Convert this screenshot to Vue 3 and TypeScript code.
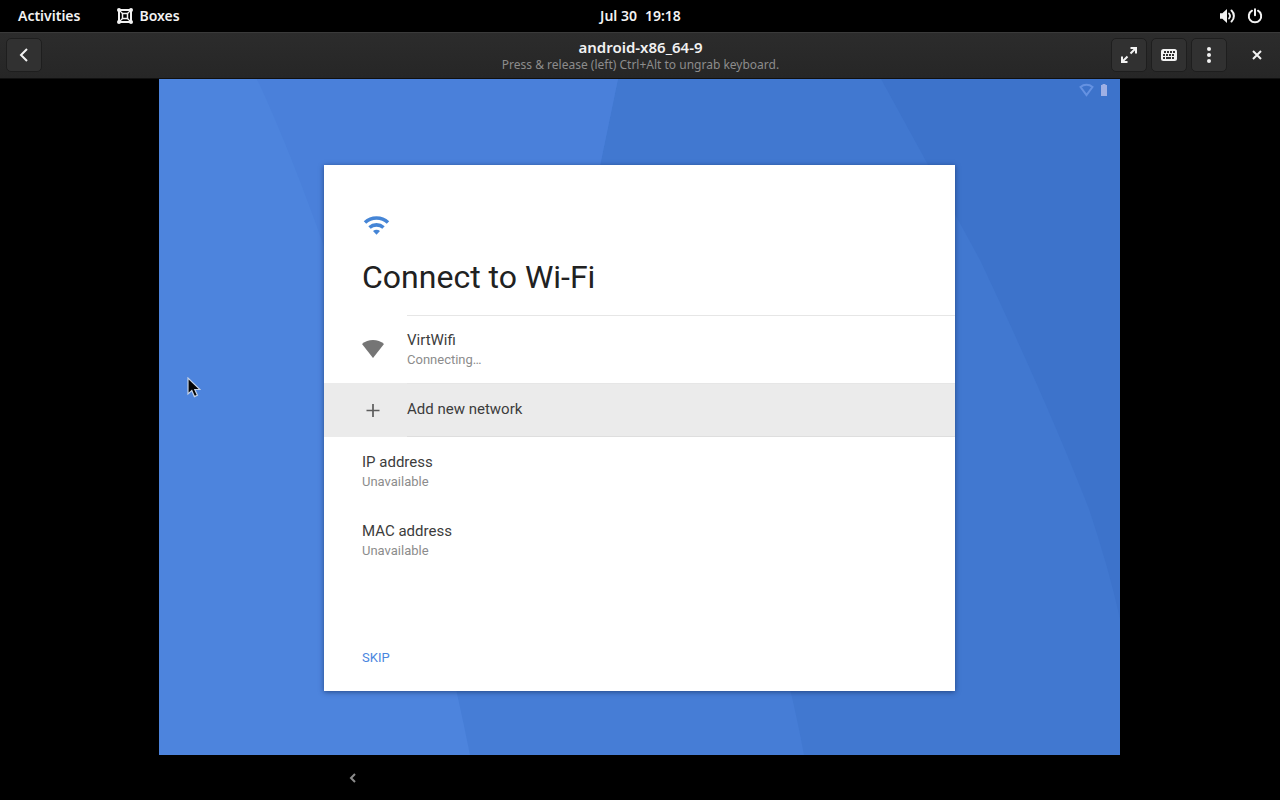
<script setup lang="ts">
interface Network {
  name: string
  status?: string
  icon: 'signal' | 'plus'
  active: boolean
}

interface Detail {
  label: string
  value: string
}

const networks: Network[] = [
  { name: 'VirtWifi', status: 'Connecting…', icon: 'signal', active: false },
  { name: 'Add new network', icon: 'plus', active: true },
]

const details: Detail[] = [
  { label: 'IP address', value: 'Unavailable' },
  { label: 'MAC address', value: 'Unavailable' },
]
</script>

<template>
  <div class="desktop">
    <header class="topbar">
      <nav class="topbar-left">
        <button type="button" class="bar-button">Activities</button>
        <button type="button" class="bar-button">
          <svg viewBox="0 0 16 16" width="16" height="16" aria-hidden="true">
            <g fill="none" stroke="currentColor">
              <path d="M2 2h12v12H2z" stroke-width="2" />
              <path d="M5.5 5.5h5v5h-5z" stroke-width="1.5" />
              <path d="M2 2l3.5 3.5M14 2l-3.5 3.5M2 14l3.5-3.5M14 14l-3.5-3.5" stroke-width="1.2" />
            </g>
            <g fill="currentColor">
              <circle cx="2" cy="2" r="2" />
              <circle cx="14" cy="2" r="2" />
              <circle cx="2" cy="14" r="2" />
              <circle cx="14" cy="14" r="2" />
            </g>
          </svg>
          Boxes
        </button>
      </nav>
      <button type="button" class="bar-button clock"><span>Jul 30</span><span>19:18</span></button>
      <button type="button" class="bar-button status" aria-label="System menu">
        <svg viewBox="0 0 18 16" width="18" height="16" aria-hidden="true">
          <path d="M2 5.2h2.4L9 1v14l-4.600-4.200H2z" fill="currentColor" />
          <path d="M11 5.500a3.800 3.800 0 0 1 0 5" fill="none" stroke="currentColor" stroke-width="1.700" stroke-linecap="round" />
          <path d="M13.500 2.500c3.200 3 3.200 8 0 11" fill="none" stroke="currentColor" stroke-width="2" stroke-linecap="round" />
        </svg>
        <svg viewBox="0 0 16 16" width="16" height="16" aria-hidden="true">
          <path d="M5 2.700a6.200 6.200 0 1 0 6 0" fill="none" stroke="currentColor" stroke-width="2" stroke-linecap="round" />
          <path d="M8 1.300v6" stroke="currentColor" stroke-width="2" stroke-linecap="round" />
        </svg>
      </button>
    </header>

    <div class="titlebar">
      <div class="tools">
        <button type="button" class="tool" aria-label="Back">
          <svg viewBox="0 0 16 16" width="16" height="16" aria-hidden="true">
            <path d="M11 2L5 8l6 6" fill="none" stroke="currentColor" stroke-width="2" />
          </svg>
        </button>
      </div>
      <div class="caption">
        <h1>android-x86_64-9</h1>
        <p>Press &amp; release (left) Ctrl+Alt to ungrab keyboard.</p>
      </div>
      <div class="tools tools-right">
        <button type="button" class="tool" aria-label="Fullscreen">
          <svg viewBox="0 0 16 16" width="16" height="16" aria-hidden="true">
            <path d="M9.500 1H15v5.500M15 1L9.500 6.500M6.500 15H1V9.500M1 15l5.500-5.500" fill="none" stroke="currentColor" stroke-width="2" />
          </svg>
        </button>
        <button type="button" class="tool" aria-label="Send key combinations">
          <svg viewBox="0 0 16 16" width="16" height="16" aria-hidden="true">
            <rect x="0" y="2" width="16" height="12" rx="2.500" fill="currentColor" />
            <g fill="#303030">
              <rect x="3" y="4" width="2" height="2" />
              <rect x="6" y="4" width="2" height="2" />
              <rect x="9" y="4" width="2" height="2" />
              <rect x="12" y="4" width="2" height="2" />
              <rect x="2" y="7" width="2" height="2" />
              <rect x="5" y="7" width="2" height="2" />
              <rect x="8" y="7" width="2" height="2" />
              <rect x="11" y="7" width="2" height="2" />
              <rect x="2" y="10" width="2" height="2" />
              <rect x="5" y="10" width="5" height="2" />
              <rect x="11" y="10" width="2" height="2" />
            </g>
          </svg>
        </button>
        <button type="button" class="tool" aria-label="Menu">
          <svg viewBox="0 0 16 16" width="16" height="16" aria-hidden="true">
            <g fill="currentColor">
              <circle cx="8" cy="2" r="2" />
              <circle cx="8" cy="8" r="2" />
              <circle cx="8" cy="14" r="2" />
            </g>
          </svg>
        </button>
        <button type="button" class="close" aria-label="Close">
          <svg viewBox="0 0 16 16" width="16" height="16" aria-hidden="true">
            <path d="M4 4l8 8M12 4l-8 8" stroke="currentColor" stroke-width="2" />
          </svg>
        </button>
      </div>
    </div>

    <main class="guest">
      <div class="screen">
        <svg class="wallpaper" viewBox="0 0 961 676" preserveAspectRatio="none" aria-hidden="true">
          <path d="M0 0h961v676H0z" fill="#4178d0" />
          <path d="M722 0Q761 71 821 181Q889 325 930 430Q950 490 961 540V0z" fill="#3d73cb" />
          <path d="M98 0H459L441 87L560 380Q620 540 645 676H311z" fill="#467dd6" />
          <path d="M98 0H459L441 87L420 300H200z" fill="#4a80da" />
          <path d="M0 0H98Q140 90 190 240Q270 470 311 676H0z" fill="#4d84dd" />
        </svg>

        <svg class="indicators" viewBox="0 0 30 14" width="30" height="14" aria-hidden="true">
          <path d="M1.500 4C5 1 10 1 13.500 4L7.500 12z" fill="none" stroke="#6592e2" stroke-width="2" />
          <path d="M22 2h1.500V1h3v1H28v11h-6z" fill="#9fb0e4" />
        </svg>

        <section class="dialog" aria-labelledby="wifi-title">
          <svg class="wifi-logo" viewBox="0 0 28 20" width="28" height="20" aria-hidden="true">
            <g fill="none" stroke="#4585d6" stroke-width="3.600">
              <path d="M2 7.500C8.500 1.500 18.500 1.500 25 7.500" />
              <path d="M6.500 12.500C10.500 9 16.500 9 20.500 12.500" />
            </g>
            <path d="M10 16c2-1.800 5-1.800 7 0l-3.500 3.700z" fill="#4585d6" />
          </svg>
          <h2 id="wifi-title">Connect to Wi-Fi</h2>

          <ul class="networks">
            <li v-for="network in networks" :key="network.name">
              <button type="button" class="network" :class="{ active: network.active }">
                <span class="network-icon">
                  <svg v-if="network.icon === 'signal'" viewBox="0 0 22 18" width="22" height="18" aria-hidden="true">
                    <path d="M0 4C6-1.200 16-1.200 22 4L11 18z" fill="#757575" />
                  </svg>
                  <svg v-else viewBox="0 0 22 14" width="22" height="14" aria-hidden="true">
                    <path d="M11 1v13M4.500 7.500h13" stroke="#5c5c5c" stroke-width="1.700" />
                  </svg>
                </span>
                <span class="network-text">
                  <span class="primary">{{ network.name }}</span>
                  <span v-if="network.status" class="secondary">{{ network.status }}</span>
                </span>
              </button>
            </li>
          </ul>

          <dl class="details">
            <div v-for="detail in details" :key="detail.label" class="detail">
              <dt class="primary">{{ detail.label }}</dt>
              <dd class="secondary">{{ detail.value }}</dd>
            </div>
          </dl>

          <footer class="actions">
            <button type="button" class="skip">SKIP</button>
          </footer>
        </section>

        <svg class="pointer" viewBox="0 0 14 22" width="14" height="22" aria-hidden="true">
          <path d="M1 1v16l3.800-3.400 2.600 6 3-1.300-2.600-5.800H13z" fill="#050505" stroke="#c5d2e6" stroke-width="1.200" />
        </svg>
      </div>

      <nav class="navbar">
        <button type="button" class="nav-back" aria-label="Android back">
          <svg viewBox="0 0 8 10" width="8" height="10" aria-hidden="true">
            <path d="M6 1L2 5l4 4" fill="none" stroke="#8c8c8c" stroke-width="2" />
          </svg>
        </button>
      </nav>
    </main>
  </div>
</template>

<style>
body {
  background: #000;
}
</style>

<style scoped>
.desktop {
  display: flex;
  flex-direction: column;
  min-height: 100vh;
  background: #000;
  color: #f2f2f2;
  font-family: "Noto Sans", sans-serif;
}

button {
  margin: 0;
  padding: 0;
  border: 0;
  background: none;
  color: inherit;
  font: inherit;
  text-align: left;
  cursor: pointer;
}

svg {
  display: block;
}

.topbar {
  display: grid;
  grid-template-columns: 1fr auto 1fr;
  align-items: center;
  height: 32px;
  padding: 0 17px 0 18px;
  font-size: 14px;
  font-weight: 600;
}

.topbar-left {
  display: flex;
  gap: 37px;
}

.bar-button {
  display: flex;
  align-items: center;
  gap: 6px;
  line-height: 32px;
}

.clock {
  gap: 8px;
}

.status {
  justify-self: end;
  gap: 11px;
}

.titlebar {
  display: grid;
  grid-template-columns: 1fr auto 1fr;
  align-items: center;
  height: 47px;
  padding: 0 5px 2px 6px;
  box-sizing: border-box;
  border-top: 1px solid #3a3a3a;
  border-bottom: 1px solid #101010;
  background: linear-gradient(#2c2c2c, #262626);
}

.caption {
  padding-top: 2px;
  text-align: center;
}

.caption h1 {
  margin: 0;
  font-size: 15px;
  font-weight: 600;
  line-height: 18px;
}

.caption p {
  margin: 0;
  color: #8c8c8c;
  font-size: 12px;
  line-height: 18px;
}

.tools {
  display: flex;
  gap: 4px;
}

.tools-right {
  justify-content: flex-end;
}

.tool,
.close {
  display: flex;
  align-items: center;
  justify-content: center;
  box-sizing: border-box;
  width: 36px;
  height: 34px;
}

.tool {
  border: 1px solid #1e1e1e;
  border-radius: 5px;
  background: #313131;
}

.close {
  margin-left: 8px;
}

.guest {
  display: flex;
  flex: 1;
  flex-direction: column;
  padding: 0 160px 0 159px;
}

.screen {
  position: relative;
  display: flex;
  flex: 1;
  padding: 86px 165px 64px;
  font-family: Roboto, sans-serif;
}

.wallpaper {
  position: absolute;
  inset: 0;
  width: 100%;
  height: 100%;
}

.indicators {
  position: absolute;
  top: 4px;
  right: 11px;
}

.pointer {
  position: absolute;
  top: 298px;
  left: 28px;
}

.dialog {
  position: relative;
  display: flex;
  flex: 1;
  flex-direction: column;
  background: #fff;
  color: #212121;
  box-shadow: 0 1px 5px rgba(15, 35, 80, 0.6);
}

.wifi-logo {
  margin: 50px 0 0 39px;
}

.dialog h2 {
  margin: 22px 38px 18px;
  font-size: 32px;
  font-weight: 400;
  line-height: 40px;
}

.networks {
  margin: 0;
  padding: 0;
  list-style: none;
}

.network {
  display: flex;
  width: 100%;
}

.network-icon {
  display: flex;
  flex: none;
  align-items: center;
  box-sizing: border-box;
  width: 83px;
  padding-left: 38px;
}

.network-text {
  display: flex;
  flex: 1;
  flex-direction: column;
  padding: 14px 0 13px;
  border-top: 1px solid #e6e6e6;
}

.network.active {
  background: #ebebeb;
}

.network.active .network-text {
  padding: 15px 0 17px;
  border-bottom: 1px solid #dedede;
}

.primary {
  color: #3c3c3c;
  font-size: 15px;
  line-height: 20px;
}

.secondary {
  color: #8c8c8c;
  font-size: 13px;
  line-height: 20px;
}

.details {
  margin: 0;
  padding: 1px 38px 0;
}

.detail {
  padding: 14px 0 15px;
}

.detail dd {
  margin: 0;
}

.actions {
  margin-top: auto;
  padding: 0 38px 23px;
}

.skip {
  color: #4a86e0;
  font-size: 13px;
  line-height: 20px;
}

.navbar {
  display: flex;
  align-items: center;
  height: 45px;
  padding-left: 190px;
}
</style>
